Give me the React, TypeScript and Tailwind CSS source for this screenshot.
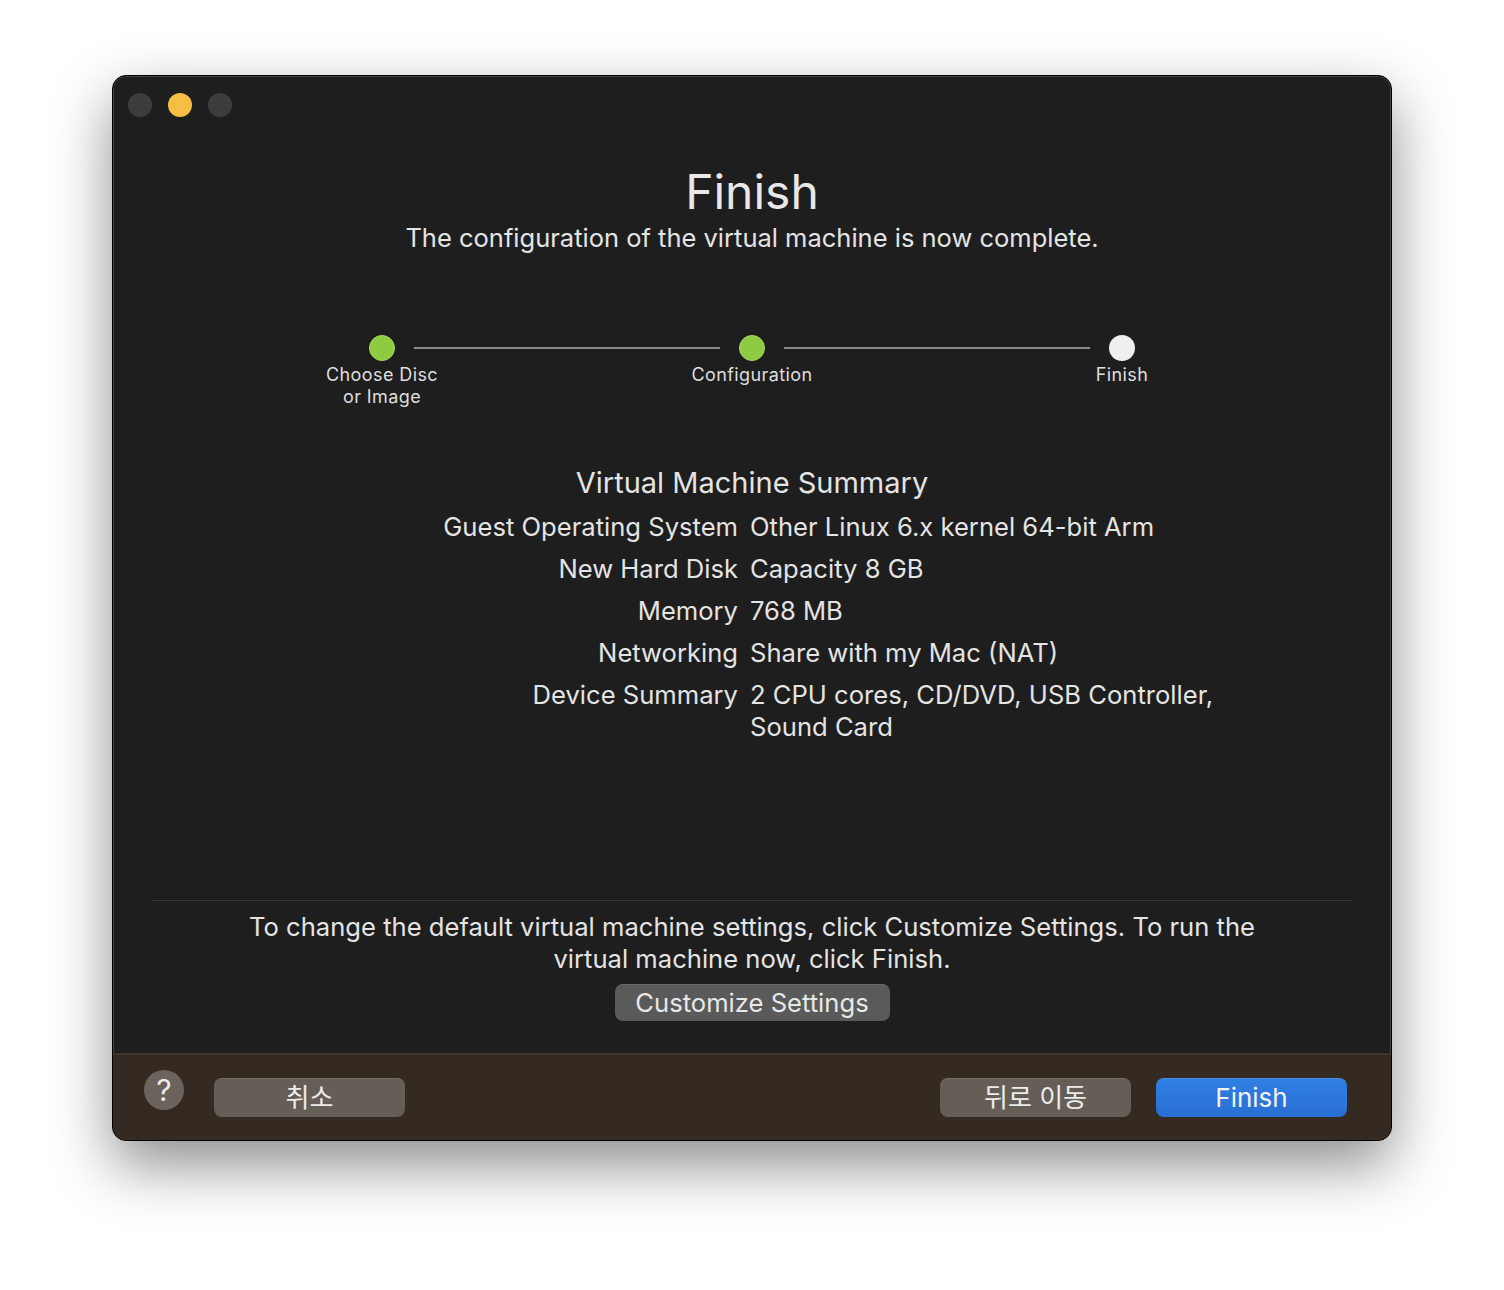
import React from "react";

interface Step {
  label: string[];
  done: boolean;
}

const steps: Step[] = [
  { label: ["Choose Disc", "or Image"], done: true },
  { label: ["Configuration"], done: true },
  { label: ["Finish"], done: false },
];

const summary: { label: string; value: string[] }[] = [
  { label: "Guest Operating System", value: ["Other Linux 6.x kernel 64-bit Arm"] },
  { label: "New Hard Disk", value: ["Capacity 8 GB"] },
  { label: "Memory", value: ["768 MB"] },
  { label: "Networking", value: ["Share with my Mac (NAT)"] },
  { label: "Device Summary", value: ["2 CPU cores, CD/DVD, USB Controller,", "Sound Card"] },
];

const font = "font-['Inter','Noto_Sans_CJK_KR',sans-serif]";

const StepDot: React.FC<{ step: Step }> = ({ step }) => (
  <div className="flex w-[26px] flex-col items-center">
    <div
      className={
        step.done
          ? "h-[26px] w-[26px] shrink-0 rounded-full border border-[#a9dc6a] bg-[#8fcb40]"
          : "h-[26px] w-[26px] shrink-0 rounded-full bg-[#efefef]"
      }
    />
    <div className="mt-[3px] whitespace-nowrap text-center text-[18px] leading-[22px] tracking-[0.4px] text-[#dedede]">
      {step.label.map((l) => (
        <div key={l}>{l}</div>
      ))}
    </div>
  </div>
);

const App: React.FC = () => {
  return (
    <div className={`min-h-screen bg-white pl-[112px] pt-[75px] ${font}`}>
      <div className="flex h-[1066px] w-[1280px] flex-col overflow-hidden rounded-[14px] border border-black bg-[#1e1e1e] shadow-[0_24px_60px_rgba(0,0,0,0.45),inset_0_0_0_1px_rgba(255,255,255,0.16)]">
        {/* title bar */}
        <div className="flex h-[57px] shrink-0 items-center gap-4 px-[15px]">
          <div className="h-6 w-6 rounded-full bg-[#3d3d3d]" />
          <div className="h-6 w-6 rounded-full bg-[#f6bf44]" />
          <div className="h-6 w-6 rounded-full bg-[#3d3d3d]" />
        </div>

        <div className="flex flex-1 flex-col items-center text-[#e4e4e4]">
          <h1 className="mt-[35px] text-[48px] font-normal leading-[48px] text-[#e8e8e8]">Finish</h1>
          <p className="mt-[9px] text-[25.5px] leading-[26px]">
            The configuration of the virtual machine is now complete.
          </p>

          {/* stepper */}
          <div className="mt-[84px] flex h-[74px] w-[766px] items-start">
            <StepDot step={steps[0]} />
            <div className="mx-[19px] mt-3 h-[2px] flex-1 bg-[#8a8a8a]" />
            <StepDot step={steps[1]} />
            <div className="mx-[19px] mt-3 h-[2px] flex-1 bg-[#8a8a8a]" />
            <StepDot step={steps[2]} />
          </div>

          <h2 className="mt-[59px] text-[29px] leading-[30px]">Virtual Machine Summary</h2>

          <div className="mt-[13px] grid w-full grid-cols-[625px_1fr] gap-x-3 gap-y-[10px] text-[25.6px] leading-[32px]">
            {summary.map((row) => (
              <React.Fragment key={row.label}>
                <div className="text-right">{row.label}</div>
                <div>
                  {row.value.map((v) => (
                    <div key={v}>{v}</div>
                  ))}
                </div>
              </React.Fragment>
            ))}
          </div>

          <div className="flex-1" />

          <div className="w-[1200px] border-t border-[#383838]" />
          <p className="mt-[10px] text-center text-[25.6px] leading-[32px]">
            To change the default virtual machine settings, click Customize Settings. To run the
            <br />
            virtual machine now, click Finish.
          </p>
          <button className="mb-[32px] mt-[9px] h-[37px] w-[275px] rounded-[8px] border-t border-[#6a6a6a] bg-[#5a5a5a] text-[25.6px] leading-[32px] text-[#e8e8e8]">
            Customize Settings
          </button>
        </div>

        {/* footer */}
        <div className="flex h-[87px] shrink-0 items-center border-t-2 border-[#41352b] bg-[#352a21] pl-[31px] pr-[44px]">
          <div className="mb-4 flex h-10 w-10 items-center justify-center rounded-full bg-[#6b635c] text-[30px] leading-none text-[#ececec]">
            ?
          </div>
          <button className="ml-[30px] h-[39px] w-[191px] rounded-[8px] border-t border-[#766f68] bg-[#655e57] text-[26px] leading-[32px] text-[#ececec]">
            취소
          </button>
          <div className="flex-1" />
          <button className="h-[39px] w-[191px] rounded-[8px] border-t border-[#766f68] bg-[#655e57] text-[26px] leading-[32px] text-[#ececec]">
            뒤로 이동
          </button>
          <button className="ml-[25px] h-[39px] w-[191px] rounded-[8px] border-t border-[#4a8cea] bg-gradient-to-b from-[#307fe3] to-[#2a6fd3] text-[26px] leading-[32px] text-[#f2f2f2]">
            Finish
          </button>
        </div>
      </div>
    </div>
  );
};

export default App;
